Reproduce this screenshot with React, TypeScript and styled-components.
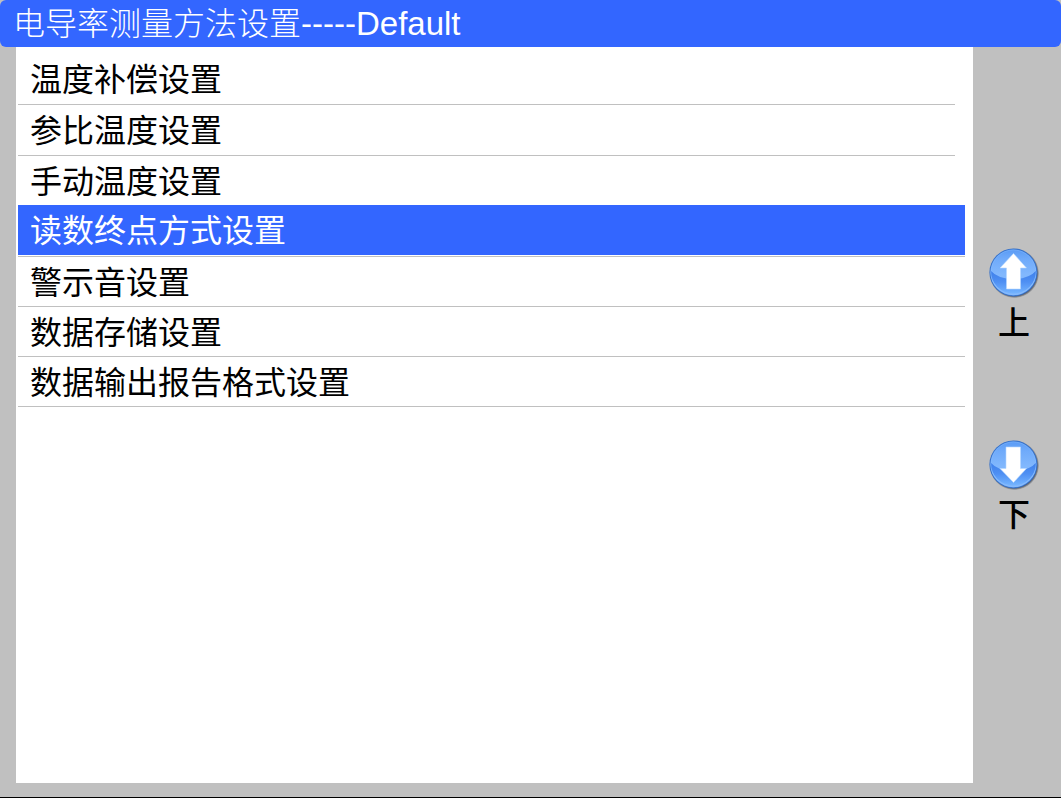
import React, { useState } from "react";
import styled, { createGlobalStyle } from "styled-components";

const BLUE = "#3366ff";
const GRAY = "#c0c0c0";

const GlobalStyle = createGlobalStyle`
  *, *::before, *::after { box-sizing: border-box; }
  body {
    margin: 0;
    background: ${GRAY};
    font-family: "Noto Sans CJK SC", sans-serif;
  }
`;

const Screen = styled.div`
  display: flex;
  flex-direction: column;
  min-height: 100vh;
  background: ${GRAY};
  border-bottom: 1px solid #000;
`;

const TitleBar = styled.header`
  display: flex;
  align-items: center;
  height: 47px;
  padding: 0 13px;
  background: ${BLUE};
  border-radius: 6px;
`;

const Title = styled.h1`
  margin: 0;
  color: #fff;
  font-family: "Liberation Sans", "Noto Sans CJK SC", sans-serif;
  font-size: 32px;
  line-height: 44px;
  font-weight: 300;
  white-space: nowrap;
`;

const MethodName = styled.span`
  font-size: 33px;
  font-weight: 400;
`;

const Content = styled.div`
  display: flex;
  flex: 1;
  padding: 0 0 14px 16px;
`;

const Panel = styled.main`
  flex: 1;
  min-width: 0;
  padding: 7px 8px 7px 2px;
  background: #fff;
`;

const List = styled.ul`
  margin: 0;
  padding: 0;
  list-style: none;
`;

const Item = styled.li<{ $short: boolean; $line: boolean; $selected: boolean }>`
  margin-right: ${(p) => (p.$short ? 10 : 0)}px;
  padding-bottom: ${(p) => (p.$selected ? 1 : 0)}px;
  border-bottom: ${(p) => (p.$line ? `1px solid ${GRAY}` : "none")};
`;

const ItemButton = styled.button<{ $selected: boolean; $tall: boolean }>`
  display: block;
  width: 100%;
  height: ${(p) => (p.$tall ? 50 : 49)}px;
  padding: 0 12px 4px;
  border: 0;
  background: ${(p) => (p.$selected ? BLUE : "transparent")};
  color: ${(p) => (p.$selected ? "#fff" : "#000")};
  font: inherit;
  font-size: 32px;
  line-height: 44px;
  text-align: left;
  white-space: nowrap;
  cursor: pointer;
`;

const Pager = styled.nav`
  display: flex;
  flex-direction: column;
  align-items: center;
  gap: 98px;
  width: 88px;
  padding: 201px 6px 0 0;
`;

const PagerButton = styled.button`
  display: flex;
  flex-direction: column;
  align-items: center;
  padding: 0;
  border: 0;
  background: transparent;
  color: #000;
  font: inherit;
  font-size: 32px;
  font-weight: 500;
  line-height: 44px;
  cursor: pointer;
`;

function ArrowIcon({ direction }: { direction: "up" | "down" }) {
  const id = `orb-${direction}`;
  const up = direction === "up";
  return (
    <svg width="50" height="50" viewBox="0 0 50 50" aria-hidden="true">
      <defs>
        <linearGradient id={`${id}-top`} x1="0" y1="0" x2="0" y2="1">
          <stop offset="0" stopColor="#5a9bf5" />
          <stop offset="0.2" stopColor="#6faafa" />
          <stop offset="0.55" stopColor="#82b8fd" />
          <stop offset="1" stopColor="#82b8fd" />
        </linearGradient>
        <linearGradient id={`${id}-low`} x1="0" y1="0" x2="0" y2="1">
          <stop offset="0" stopColor="#3d7fea" />
          <stop offset="0.5" stopColor="#4f90f3" />
          <stop offset="1" stopColor="#74b4ff" />
        </linearGradient>
        <radialGradient id={`${id}-shadow`} cx="0.5" cy="0.5" r="0.5">
          <stop offset="0.9" stopColor="#333c4c" stopOpacity="0.9" />
          <stop offset="1" stopColor="#333c4c" stopOpacity="0.1" />
        </radialGradient>
      </defs>
      <circle cx="25.3" cy="25.3" r="24.7" fill={`url(#${id}-shadow)`} />
      <circle cx="24.4" cy="24.4" r="24" fill="#3873cb" />
      <circle cx="24.4" cy="24.4" r="22.9" fill={`url(#${id}-top)`} />
      <path
        d="M1.5 22.5 Q9 31 24.4 31 Q40 31 47.300 22.500 A22.900 22.900 0 0 1 1.500 22.500 Z"
        fill={`url(#${id}-low)`}
      />
      <circle cx="24.400" cy="24.400" r="22.500" fill="none" stroke="#8cc0ff" strokeOpacity="0.4" />
      <path
        d={
          up
            ? "M24.500 5.500 L37.500 20 H31.500 V41 H17.500 V20 H11 Z"
            : "M24.500 42.500 L37.500 28.500 H31.500 V7 H17 V28.500 H11 Z"
        }
        fill="#fff"
        stroke="#b5d6ff"
        strokeWidth="0.6"
      />
    </svg>
  );
}

const items = [
  { label: "温度补偿设置", short: true, tall: true },
  { label: "参比温度设置", short: true, tall: true },
  { label: "手动温度设置", short: false, tall: false },
  { label: "读数终点方式设置", short: false, tall: true },
  { label: "警示音设置", short: false, tall: false },
  { label: "数据存储设置", short: false, tall: false },
  { label: "数据输出报告格式设置", short: false, tall: false },
];

export default function App() {
  const [selected, setSelected] = useState(3);
  return (
    <>
      <GlobalStyle />
      <Screen>
        <TitleBar>
          <Title>
            电导率测量方法设置<MethodName>-----Default</MethodName>
          </Title>
        </TitleBar>
        <Content>
          <Panel>
            <List>
              {items.map((item, i) => (
                <Item
                  key={item.label}
                  $short={item.short}
                  $line={i + 1 !== selected}
                  $selected={i === selected}
                >
                  <ItemButton
                    type="button"
                    $selected={i === selected}
                    $tall={item.tall}
                    onClick={() => setSelected(i)}
                  >
                    {item.label}
                  </ItemButton>
                </Item>
              ))}
            </List>
          </Panel>
          <Pager>
            <PagerButton type="button" onClick={() => setSelected(Math.max(0, selected - 1))}>
              <ArrowIcon direction="up" />
              上
            </PagerButton>
            <PagerButton
              type="button"
              onClick={() => setSelected(Math.min(items.length - 1, selected + 1))}
            >
              <ArrowIcon direction="down" />
              下
            </PagerButton>
          </Pager>
        </Content>
      </Screen>
    </>
  );
}
